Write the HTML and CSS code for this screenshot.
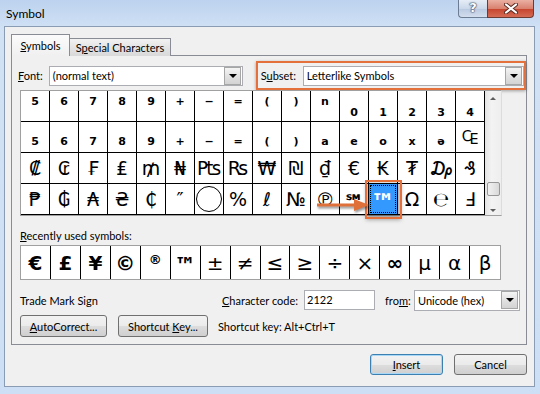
FILE: index.html
```html
<!DOCTYPE html>
<html lang="en">

<head>
    <meta charset="UTF-8">
    <title>Symbol</title>
    <link rel="stylesheet" href="styles.css">
</head>

<body>
    <div class="window">
        <div class="titlebar">
            <span class="title">Symbol</span>
            <div class="controls">
                <span class="btn-help">?</span>
                <span class="btn-close">
                    <svg width="14" height="11" viewBox="0 0 14 11">
                        <path d="M2 1.5 L12 9.5 M12 1.5 L2 9.5" stroke="#5a2a22" stroke-width="4" stroke-linecap="round"/>
                        <path d="M2 1.5 L12 9.5 M12 1.5 L2 9.5" stroke="#fff" stroke-width="2.2" stroke-linecap="round"/>
                    </svg>
                </span>
            </div>
        </div>

        <div class="client">
            <div class="tabs">
                <span class="tab active"><u>S</u>ymbols</span>
                <span class="tab">S<u>p</u>ecial Characters</span>
            </div>

            <div class="panel">
                <div class="font-row">
                    <span class="font-label"><u>F</u>ont:</span>
                    <div class="select font-select"><span>(normal text)</span><span class="drop"></span></div>
                    <div class="subset-box">
                        <span class="subset-label">S<u>u</u>bset:</span>
                        <div class="select subset-select"><span>Letterlike Symbols</span><span class="drop"></span></div>
                    </div>
                </div>

                <div class="chart">
                    <div class="chart-grid">
                        <!-- row 1 -->
                        <span class="cell sm top">5</span><span class="cell sm top">6</span><span class="cell sm top">7</span><span class="cell sm top">8</span>
                        <span class="cell sm top">9</span><span class="cell sm top">+</span><span class="cell sm top">−</span><span class="cell sm top">=</span>
                        <span class="cell sm top">(</span><span class="cell sm top">)</span><span class="cell sm top">n</span><span class="cell sm mid">0</span>
                        <span class="cell sm mid">1</span><span class="cell sm mid">2</span><span class="cell sm mid">3</span><span class="cell sm mid">4</span>
                        <!-- row 2 -->
                        <span class="cell sm low">5</span><span class="cell sm low">6</span><span class="cell sm low">7</span><span class="cell sm low">8</span>
                        <span class="cell sm low">9</span><span class="cell sm low">+</span><span class="cell sm low">−</span><span class="cell sm low">=</span>
                        <span class="cell sm low">(</span><span class="cell sm low">)</span><span class="cell sm low">a</span><span class="cell sm low">e</span>
                        <span class="cell sm low">o</span><span class="cell sm low">x</span><span class="cell sm low">ə</span><span class="cell big">₠</span>
                        <!-- row 3 -->
                        <span class="cell big">₡</span><span class="cell big">₢</span><span class="cell big">₣</span><span class="cell big">₤</span>
                        <span class="cell big">₥</span><span class="cell big">₦</span><span class="cell big">₧</span><span class="cell big">₨</span>
                        <span class="cell big">₩</span><span class="cell big">₪</span><span class="cell big">₫</span><span class="cell big">€</span>
                        <span class="cell big">₭</span><span class="cell big">₮</span><span class="cell big">₯</span><span class="cell big">₰</span>
                        <!-- row 4 -->
                        <span class="cell big">₱</span><span class="cell big">₲</span><span class="cell big">₳</span><span class="cell big">₴</span>
                        <span class="cell big">₵</span><span class="cell big">″</span><span class="cell"><span class="circle"></span></span><span class="cell big">%</span>
                        <span class="cell big">ℓ</span><span class="cell big">№</span><span class="cell big">℗</span><span class="cell mark">℠</span>
                        <span class="cell sel">™</span><span class="cell big">Ω</span><span class="cell big">℮</span><span class="cell big">Ⅎ</span>
                    </div>
                    <div class="scrollbar">
                        <span class="arrow-up"></span>
                        <span class="thumb"></span>
                        <span class="arrow-down"></span>
                    </div>
                    <svg class="pointer" width="54" height="14" viewBox="0 0 54 14">
                        <path d="M1 7 H42" stroke="#e0703a" stroke-width="3"/>
                        <path d="M38 1 L53 7 L38 13 Z" fill="#e0703a"/>
                    </svg>
                </div>

                <div class="recent-label"><u>R</u>ecently used symbols:</div>
                <div class="recent">
                    <span class="rcell bold">€</span><span class="rcell bold">£</span><span class="rcell bold">¥</span><span class="rcell bold">©</span>
                    <span class="rcell tiny">®</span><span class="rcell tm">™</span><span class="rcell">±</span><span class="rcell">≠</span>
                    <span class="rcell">≤</span><span class="rcell">≥</span><span class="rcell">÷</span><span class="rcell">×</span>
                    <span class="rcell bold">∞</span><span class="rcell">µ</span><span class="rcell">α</span><span class="rcell">β</span>
                </div>

                <div class="info-row">
                    <span class="char-name">Trade Mark Sign</span>
                    <span class="code-label"><u>C</u>haracter code:</span>
                    <span class="code-input">2122</span>
                    <span class="from-label">fro<u>m</u>:</span>
                    <div class="select from-select"><span>Unicode (hex)</span><span class="drop"></span></div>
                </div>

                <div class="btn-row">
                    <button class="btn btn-auto"><u>A</u>utoCorrect...</button>
                    <button class="btn btn-key">Shortcut <u>K</u>ey...</button>
                    <span class="shortcut">Shortcut key: Alt+Ctrl+T</span>
                </div>
            </div>

            <div class="footer">
                <button class="btn btn-default"><u>I</u>nsert</button>
                <button class="btn">Cancel</button>
            </div>
        </div>
    </div>
</body>

</html>
```

FILE: styles.css
```css
body {
    margin: 0;
    padding: 0;
    font-family: Lato, "Liberation Sans", sans-serif;
    font-size: 11px;
    color: #000;
}

.window {
    width: 540px;
    height: 394px;
    display: flex;
    flex-direction: column;
    background: linear-gradient(180deg, #bcd2ee 0, #d2e2f5 30px, #cddff4 100%);
}

/* title bar */

.titlebar {
    height: 26px;
    display: flex;
    justify-content: space-between;
    align-items: flex-start;
}

.title {
    margin: 6px 0 0 6px;
    font-size: 12px;
}

.controls {
    display: flex;
    margin-right: 6px;
}

.btn-help {
    width: 28px;
    height: 17px;
    border: 1px solid #6b7c93;
    border-top: none;
    border-right: none;
    border-radius: 0 0 0 4px;
    background: linear-gradient(#e6edf6, #cbd8ea 50%, #b8c9e0 51%, #d3deee);
    color: #fff;
    font: bold 13px "DejaVu Sans", sans-serif;
    text-align: center;
    line-height: 16px;
    text-shadow: 0 0 1px #2e3d52, 0 0 1px #2e3d52, 0 0 2px #2e3d52;
}

.btn-close {
    width: 45px;
    height: 17px;
    border: 1px solid #6e3b33;
    border-top: none;
    border-radius: 0 0 4px 0;
    background: linear-gradient(#eab0a3, #d9826f 50%, #c5432d 51%, #d56b55);
    display: flex;
    justify-content: center;
    align-items: center;
}

/* client area */

.client {
    flex: 1;
    margin: 0 5px 7px 4px;
    padding: 7px 7px 0 6px;
    background: #f0f0f0;
    border: 1px solid #8a9bb4;
    display: flex;
    flex-direction: column;
}

.tabs {
    display: flex;
    align-items: flex-end;
    height: 22px;
    margin-bottom: -1px;
    position: relative;
    z-index: 1;
}

.tab {
    box-sizing: border-box;
    height: 18px;
    width: 102px;
    border: 1px solid #898c95;
    border-bottom: none;
    background: linear-gradient(#f2f2f2, #e4e4e4 50%, #d9d9d9);
    line-height: 17px;
    text-align: center;
    white-space: nowrap;
}

.tab.active {
    height: 22px;
    width: 59px;
    line-height: 21px;
    background: linear-gradient(#fbfbfb, #f0f0f0);
    margin-right: -1px;
    position: relative;
    z-index: 2;
}

.panel {
    border: 1px solid #898c95;
    background: #f0f0f0;
    padding: 0 0 7px 8px;
}

/* selects */

.select {
    height: 18px;
    border: 1px solid #abadb3;
    background: #fff;
    display: flex;
    align-items: center;
    justify-content: space-between;
    padding-left: 3px;
}

.drop {
    width: 15px;
    height: 16px;
    margin-right: 1px;
    border: 1px solid #a6a6a6;
    background: linear-gradient(#f4f4f4, #e2e2e2 50%, #d3d3d3);
    position: relative;
}

.drop::after {
    content: "";
    position: absolute;
    left: 4px;
    top: 6px;
    border-left: 4px solid transparent;
    border-right: 4px solid transparent;
    border-top: 4px solid #000;
}

.font-row {
    margin-top: 5px;
    height: 29px;
    display: flex;
    align-items: center;
}

.font-label {
    width: 31px;
    margin-left: -2px;
}

.font-select {
    width: 190px;
}

.subset-box {
    margin-left: 13px;
    height: 25px;
    width: 265px;
    border: 2px solid #e4703c;
    box-shadow: 0 1px 3px rgba(0, 0, 0, 0.35);
    display: flex;
    align-items: center;
    padding-left: 3px;
}

.subset-label {
    width: 42px;
}

.subset-select {
    width: 216px;
}

/* character chart */

.chart {
    display: flex;
    position: relative;
    width: 498px;
}

.chart-grid {
    display: grid;
    grid-template-columns: repeat(16, 29px);
    grid-template-rows: repeat(4, 31px);
    border-left: 1px solid #a0a0a0;
    border-top: 1px solid #a0a0a0;
    border-bottom: 1px solid #a0a0a0;
    background: #fff;
    font-family: "DejaVu Sans", sans-serif;
}

.cell {
    border-right: 1px solid #000;
    border-bottom: 1px solid #000;
    background: #fff;
    display: flex;
    justify-content: center;
    align-items: center;
    font-size: 19px;
    overflow: hidden;
}

.cell.sm {
    font-size: 11px;
    font-weight: bold;
}

.cell.top {
    align-items: flex-start;
    padding-top: 4px;
}

.cell.mid {
    padding-top: 12px;
}

.cell.low {
    align-items: flex-end;
    padding-bottom: 4px;
}

.cell.mark {
    font-size: 20px;
    font-weight: bold;
    padding-top: 6px;
}

.circle {
    width: 26px;
    height: 26px;
    border: 1px solid #000;
    border-radius: 50%;
    box-sizing: border-box;
}

.cell.sel {
    background: #3399ff;
    color: #fff;
    font-size: 24px;
    font-weight: bold;
    padding-top: 8px;
    position: relative;
    z-index: 1;
    overflow: visible;
    outline: 2px solid #e4703c;
    outline-offset: 2px;
    box-shadow: 0 2px 4px 3px rgba(0, 0, 0, 0.3);
}

.cell.sel::after {
    content: "";
    position: absolute;
    inset: 1px;
    border: 1px dotted #000;
}

.scrollbar {
    width: 16px;
    border-top: 1px solid #a0a0a0;
    border-bottom: 1px solid #a0a0a0;
    border-right: 1px solid #dcdcdc;
    background: linear-gradient(90deg, #e3e3e3, #f3f3f3 40%, #eeeeee);
    display: flex;
    flex-direction: column;
    align-items: center;
}

.arrow-up,
.arrow-down {
    width: 0;
    height: 0;
    border-left: 3px solid transparent;
    border-right: 3px solid transparent;
}

.arrow-up {
    margin-top: 6px;
    border-bottom: 3px solid #5d5d5d;
}

.arrow-down {
    margin-top: 13px;
    border-top: 3px solid #5d5d5d;
}

.thumb {
    width: 13px;
    height: 14px;
    margin-top: 82px;
    border: 1px solid #979797;
    border-radius: 2px;
    box-sizing: border-box;
    background: linear-gradient(90deg, #f1f1f1, #e6e6e6 50%, #d8d8d8);
}

.pointer {
    position: absolute;
    left: 296px;
    top: 108px;
    z-index: 2;
    filter: drop-shadow(1px 2px 1px rgba(0, 0, 0, 0.4));
}

/* recently used */

.recent-label {
    margin-top: 12px;
    line-height: 16px;
}

.recent {
    margin-top: 1px;
    display: flex;
    width: 479px;
    height: 33px;
    border: 1px solid #a0a0a0;
    background: #fff;
    font-family: "DejaVu Sans", sans-serif;
}

.rcell {
    width: 29px;
    border-right: 1px solid #000;
    display: flex;
    justify-content: center;
    align-items: center;
    font-size: 20px;
}

.rcell:last-child {
    width: 30px;
    border-right: none;
}

.rcell.bold {
    font-weight: bold;
}

.rcell.tiny {
    font-size: 13px;
    font-weight: bold;
    align-items: flex-start;
    padding-top: 6px;
}

.rcell.tm {
    font-size: 22px;
    font-weight: bold;
    padding-top: 6px;
}

/* info rows */

.info-row {
    margin-top: 10px;
    height: 20px;
    display: flex;
    align-items: center;
}

.char-name {
    width: 202px;
}

.code-label {
    width: 82px;
}

.code-input {
    box-sizing: border-box;
    width: 71px;
    height: 20px;
    line-height: 18px;
    border: 1px solid #abadb3;
    background: #fff;
    padding-left: 2px;
}

.from-label {
    margin-left: 10px;
    width: 29px;
}

.from-select {
    width: 101px;
    height: 19px;
}

.btn-row {
    margin-top: 5px;
    display: flex;
    align-items: center;
}

.btn {
    height: 22px;
    padding: 0;
    border: 1px solid #707070;
    border-radius: 3px;
    background: linear-gradient(#f2f2f2, #ebebeb 50%, #dddddd 51%, #cfcfcf);
    font-family: Lato, "Liberation Sans", sans-serif;
    font-size: 11px;
    color: #000;
}

.btn-auto {
    width: 87px;
}

.btn-key {
    width: 90px;
    margin-left: 11px;
}

.shortcut {
    margin-left: 10px;
}

.footer {
    margin-top: 9px;
    display: flex;
    justify-content: flex-end;
    gap: 11px;
}

.footer .btn {
    width: 73px;
    height: 21px;
}

.btn-default {
    border-color: #3c7fb1;
    box-shadow: inset 0 0 0 1px #a7d8f8;
}
```
